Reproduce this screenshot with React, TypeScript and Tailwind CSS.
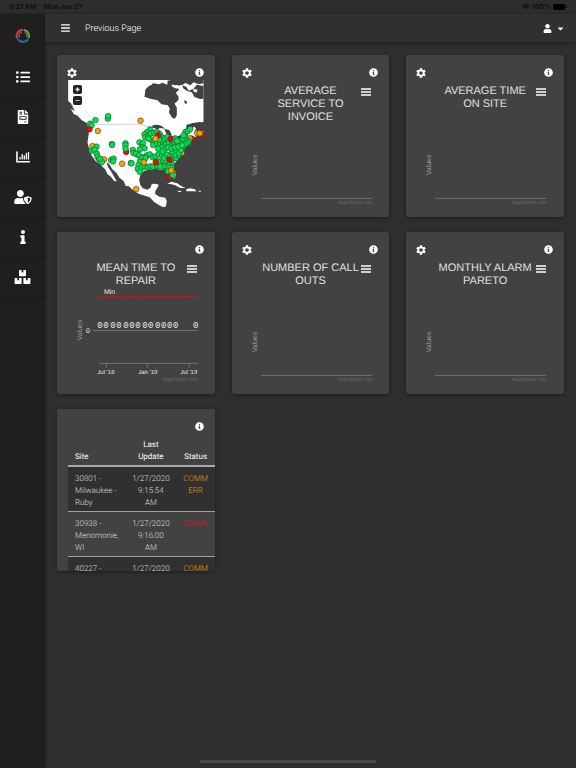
import type { ReactNode } from "react";
import {
  FaBars,
  FaBoxes,
  FaCaretDown,
  FaFileInvoice,
  FaInfo,
  FaInfoCircle,
  FaListUl,
  FaUser,
  FaUserShield,
  FaWifi,
} from "react-icons/fa";
import { MdSettings } from "react-icons/md";

const GREEN = "#00e353";
const ORANGE = "#ffa200";
const RED = "#fb0007";

type Site = [number, number, string];

const green: [number, number][] = [
  [118, 198], [155, 194], [156, 186], [102, 209], [106, 214], [121, 278], [106, 290], [115, 287],
  [122, 299], [124, 308], [129, 316], [137, 324], [131, 314], [167, 270], [168, 273], [208, 268], [208, 274],
  [208, 284], [165, 318], [172, 314], [171, 322], [224, 327], [226, 328], [230, 288], [232, 297],
  [240, 299], [250, 265], [260, 268], [258, 280], [265, 283], [251, 286], [249, 304], [256, 312],
  [251, 323], [247, 334], [245, 345], [251, 353], [257, 340], [266, 338], [275, 339], [283, 337],
  [291, 338], [303, 336], [313, 337], [326, 337], [335, 340], [343, 338], [335, 352], [349, 363],
  [345, 326], [337, 325], [328, 320], [315, 321], [306, 323], [272, 304], [281, 301], [268, 312],
  [290, 310], [299, 307], [308, 301], [318, 303], [324, 311], [333, 302], [341, 309], [350, 314],
  [360, 312], [366, 304], [356, 301], [349, 293], [361, 290], [369, 297], [379, 282], [374, 288],
  [281, 227], [272, 235], [265, 241], [267, 250], [276, 247], [284, 238], [294, 236], [302, 235],
  [311, 241], [316, 250], [286, 258], [277, 254], [295, 262], [291, 273], [303, 269], [312, 268],
  [321, 267], [329, 270], [338, 268], [347, 274], [354, 266], [362, 272], [319, 258], [309, 257],
  [326, 252], [334, 249], [318, 279], [327, 284], [336, 280], [319, 292], [306, 284], [346, 284],
  [356, 280], [367, 278], [373, 262], [380, 254], [387, 247], [388, 234], [395, 231], [402, 225],
  [382, 244], [399, 261], [395, 266], [387, 271], [378, 274], [357, 253], [350, 256], [363, 261],
];

const orangeBelow: [number, number][] = [
  [109, 276], [144, 316], [262, 310], [318, 328], [350, 355], [377, 270], [377, 297], [401, 253],
];
const orangeAbove: [number, number][] = [
  [253, 200], [125, 231], [198, 329], [240, 405], [298, 254], [263, 325], [345, 349], [423, 238],
  [431, 238],
];
const redBelow: [number, number][] = [
  [210, 294], [243, 301], [366, 267], [407, 254], [437, 242], [340, 368],
];
const redAbove: [number, number][] = [
  [100, 226], [306, 244], [343, 255], [299, 325], [340, 317],
];

const tag = (points: [number, number][], color: string): Site[] =>
  points.map(([x, y]) => [x, y, color]);

const sites: Site[] = [
  ...tag(redBelow, RED),
  ...tag(orangeBelow, ORANGE),
  ...tag(green, GREEN),
  ...tag(redAbove, RED),
  ...tag(orangeAbove, ORANGE),
];

function SiteMap() {
  return (
    <div className="relative h-[127px]">
      <svg
        viewBox="36 78 406 381"
        className="h-full w-full"
        preserveAspectRatio="xMidYMid meet"
        role="img"
        aria-label="Site map"
      >
        <path
          fill="#fff"
          d="M36 78H442V204L420 209 398 214 389 224 399 221 413 216 420 224 414 235 426 230 442 232V246L425 244 412 252 402 265 394 272 387 282 382 292 378 303 370 311 362 320 352 331 353 346 360 363 354 374 344 366 338 350 326 345 312 347 300 344 281 347 264 350 253 362 249 377 252 392 260 403 274 407 283 401 287 390 298 389 308 392 303 403 298 410 297 420 310 428 327 431 332 442 329 458 320 459 307 452 293 443 281 430 266 425 249 420 231 409 218 397 209 396 202 381 190 371 181 357 168 345 158 328 151 326 156 340 164 351 173 367 182 382 174 381 162 366 154 361 148 347 142 341 132 330 118 321 106 304 99 285 94 265 98 239 96 220 91 206 77 199 62 183 52 180 47 166 56 172 48 151 36 141Z"
        />
        <g fill="none" stroke="#fff" strokeWidth="3">
          <path strokeDasharray="4 3" d="M38 132l12 26 9 17M51 151l8 17M44 166l16 18" />
        </g>
        <g fill="#424242">
          <path d="M276 98l15-10 18 3 10-5 14 6 2-13 15 5-4 13 14 2 9 8-10 9 8 12 0 10-12 11 7 12 0 23-6 10-8-3-10-16 3-11-6-10-19-3-12-12-22-5-17-6 3-22z" />
          <path d="M339 78h103v10l-14 3-16-6-9 9-15-7-9 5-17 4-18-6-3-9z" />
          <path d="M378 94l12 4 8 12 14-6 10-12 20 4v38l-10 1-17-6-8-14-14-4-12-8z" />
          <path d="M283 220l10-7 12-1 12 4 9 8-15-2-7 5-10-5z" />
          <path d="M305 228l9 2-5 24-8 4zM324 224l15 4 7 12 1 16-10-5-9-17zM345 255l29-12 9-2-4 8-29 12z" />
          <path d="M390 213l20-6 21-3 11 3v8l-15 2-13 1-12 8-10 4z" />
          <path d="M384 139l7 2 2 7-7 1z" />
        </g>
        <g fill="#fff">
          <path d="M268 91l18 2 2-3-15-3zM348 98l14-5 8 3-9 8zM412 104l12 3-3 9-10-4zM333 390l13-7 17 5 13 9 12 5-15 0-16-8-13-4zM390 406l12-3 14 3 5 6-15 0-15 0zM364 410l12 1-2 3-8-1zM428 410h6v3h-6z" />
        </g>
        <g fill="none" stroke="#b9b9b9" strokeWidth="2">
          <path d="M102 211H253l17 4 15 4" />
          <path d="M138 327l26 5 18 3 15-2 10 9 11 4 6-3 12 14 11 3" strokeWidth="1" />
          <path d="M281 430l7-11h9M307 451l6-14 15-5" strokeWidth="1" />
        </g>
        {sites.map(([x, y, color], i) => (
          <circle key={i} cx={x} cy={y} r="8.5" fill={color} stroke="#1d3a22" strokeWidth="1.6" />
        ))}
      </svg>
      <div className="absolute top-[5px] left-[5px] flex flex-col gap-[2px]">
        <button aria-label="Zoom in" className="flex size-[9px] items-center justify-center rounded-[2px] bg-[#222]">
          <svg viewBox="0 0 10 10" className="size-[9px]" stroke="#fff" strokeWidth="1.4">
            <path d="M5 2.8v4.4M2.8 5h4.4" />
          </svg>
        </button>
        <button aria-label="Zoom out" className="flex size-[9px] items-center justify-center rounded-[2px] bg-[#222]">
          <svg viewBox="0 0 10 10" className="size-[9px]" stroke="#ccc" strokeWidth="1.2">
            <path d="M2.8 5h4.4" />
          </svg>
        </button>
      </div>
    </div>
  );
}

function Card({ settings = true, children }: { settings?: boolean; children: ReactNode }) {
  return (
    <section className="h-[162px] overflow-hidden rounded-[3px] bg-[#424242] pt-[10px] shadow-[0_1px_4px_rgba(0,0,0,0.4)]">
      <div className="flex h-[15px] items-center pr-[11px] pl-[9px]">
        {settings && (
          <button aria-label="Settings" className="text-white">
            <MdSettings className="size-[12px]" />
          </button>
        )}
        <button aria-label="Information" className="ml-auto text-white">
          <FaInfoCircle className="size-[9px]" />
        </button>
      </div>
      <div className="pl-[11px]">{children}</div>
    </section>
  );
}

function Chart({ title, children, valuesY = 85 }: { title: string; children: ReactNode; valuesY?: number }) {
  return (
    <div className="mr-[11px] grid h-[127px] font-['Liberation_Sans',Arial,sans-serif]">
      <svg viewBox="0 0 136 127" className="col-start-1 row-start-1 h-[127px] w-full">
        <text
          transform={`translate(14 ${valuesY}) rotate(-90)`}
          textAnchor="middle"
          fontSize="7"
          fill="#9a9a9a"
        >
          Values
        </text>
        {children}
        <text x="130" y="124" textAnchor="end" fontSize="5" fill="#6c6c6c">
          Highcharts.com
        </text>
      </svg>
      <div className="relative col-start-1 row-start-1 pt-[5px]">
        <h2 className="mx-auto w-[98px] text-center text-[11px] leading-[13px] text-[#e0e0e0]">{title}</h2>
        <button aria-label="Chart menu" className="absolute top-[8px] right-[7px] flex flex-col gap-[1px]">
          <span className="h-[2px] w-[10px] bg-[#cfcfcf]" />
          <span className="h-[2px] w-[10px] bg-[#cfcfcf]" />
          <span className="h-[2px] w-[10px] bg-[#cfcfcf]" />
        </button>
      </div>
    </div>
  );
}

function EmptyChart({ title }: { title: string }) {
  return (
    <Chart title={title}>
      <path d="M18 118.5H130" stroke="#707070" strokeWidth="1" />
    </Chart>
  );
}

const zeroLabels = [32, 38, 45, 51, 58, 64, 70, 77, 83, 90, 96, 102, 108, 128];

function RepairChart() {
  return (
    <Chart title="MEAN TIME TO REPAIR" valuesY={73}>
      <path d="M25 73.5H130M31 106.5H130M38.5 106v5M79.5 106v5M121.5 106v5" stroke="#707070" strokeWidth="1" fill="none" />
      <path d="M31 39.5H130" stroke="#f00" strokeWidth="1.4" strokeDasharray="4 1.6" />
      <g fontSize="6" fill="#e6e6e6">
        <text x="36" y="37" fontSize="7">Min</text>
        <text x="18" y="76" fontSize="7">0</text>
        <text x="38" y="117" textAnchor="middle">Jul '18</text>
        <text x="80" y="117" textAnchor="middle">Jan '19</text>
        <text x="121" y="117" textAnchor="middle">Jul '19</text>
      </g>
      <g fontSize="6" fontWeight="700" fill="#333" stroke="#eee" strokeWidth="1.5" paintOrder="stroke" textAnchor="middle">
        {zeroLabels.map((x) => (
          <text key={x} x={x} y="70">0</text>
        ))}
      </g>
    </Chart>
  );
}

const statusRows = [
  { site: "30801 - Milwaukee - Ruby", date: "1/27/2020 9:15:54 AM", status: "COMM ERR", down: false },
  { site: "30938 - Menomonie, WI", date: "1/27/2020 9:16:00 AM", status: "DOWN", down: true },
  { site: "40227 -", date: "1/27/2020", status: "COMM", down: false },
];

function StatusTable() {
  return (
    <table className="w-full table-fixed border-collapse text-[8px] leading-[12px] text-[#dcdcdc]">
      <colgroup>
        <col className="w-[39%]" />
        <col className="w-[35%]" />
        <col className="w-[26%]" />
      </colgroup>
      <thead>
        <tr className="border-b-2 border-[#a8a8a8] align-bottom text-white">
          <th className="pt-[5px] pb-[2px] pl-[7px] text-left font-normal">Site</th>
          <th className="px-[8px] pt-[5px] pb-[2px] font-normal">Last Update</th>
          <th className="pt-[5px] pb-[2px] font-normal">Status</th>
        </tr>
      </thead>
      <tbody>
        {statusRows.map((row) => (
          <tr
            key={row.site}
            className="border-b border-[#a0a0a0] align-top font-light odd:bg-[#303030]"
          >
            <td className="pt-[6px] pb-[2px] pl-[7px]">{row.site}</td>
            <td className="px-[6px] pt-[6px] pb-[2px] text-center">{row.date}</td>
            <td className={`px-[4px] pt-[6px] pb-[2px] text-center ${row.down ? "text-[#e8101a]" : "text-[#e8980c]"}`}>
              {row.status}
            </td>
          </tr>
        ))}
      </tbody>
    </table>
  );
}

function BarsIcon() {
  return (
    <svg viewBox="0 0 14 12" className="h-[12px] w-[14px]" fill="none" stroke="currentColor" strokeLinecap="round">
      <path d="M1 1v9.8h12.3" strokeWidth="1.6" />
      <path d="M4 8V6.5M6.2 8V3.5M8.3 8V5M10.4 8V2.5M12.5 8V1.5" strokeWidth="1.3" />
    </svg>
  );
}

const navItems = [
  { label: "List", icon: <FaListUl className="size-[14px]" /> },
  { label: "Invoices", icon: <FaFileInvoice className="size-[14px]" /> },
  { label: "Reports", icon: <BarsIcon /> },
  { label: "User security", icon: <FaUserShield className="h-[14px] w-[18px]" /> },
  { label: "About", icon: <FaInfo className="size-[14px]" /> },
  { label: "Inventory", icon: <FaBoxes className="h-[14px] w-[17px]" /> },
];

function Logo() {
  return (
    <svg viewBox="0 0 16 16" className="size-4" fill="none" strokeWidth="2.2">
      <path d="M2.2 10.4A6.1 6.1 0 0 1 8 1.9" stroke="#c93a4c" />
      <path d="M8.8 2a6.1 6.1 0 0 1 4.9 8.1" stroke="#6f9a4b" />
      <path d="M13.1 11.2a6.1 6.1 0 0 1-10.2 0" stroke="#14719f" />
      <path d="M4.4 9.6A3.9 3.9 0 0 1 7 4.2" stroke="#e59aa2" strokeWidth=".7" />
      <path d="M9.5 4.4a3.9 3.9 0 0 1 2.2 4.8" stroke="#a8c98a" strokeWidth=".7" />
    </svg>
  );
}

export default function App() {
  return (
    <div className="flex min-h-screen flex-col bg-[#2f2f2f] font-[Roboto,sans-serif] [text-rendering:geometricPrecision]">
      <div className="flex h-[14px] items-center gap-[7px] bg-[#2d2d2d] pr-[9px] pl-[9px] font-[Inter,sans-serif] text-[7px] leading-[14px] font-semibold text-[#0c0c0c]">
        <span>9:21 AM</span>
        <span>Mon Jan 27</span>
        <span className="ml-auto flex items-center gap-[2px]">
          <FaWifi className="size-[8px]" />
          <span>100%</span>
          <svg viewBox="0 0 14 6" className="h-[6px] w-[14px]">
            <rect width="12" height="6" rx="1.5" fill="#000" />
            <path d="M13 2v2" stroke="#000" />
          </svg>
        </span>
      </div>
      <div className="flex grow">
        <aside className="w-[45px] shrink-0 bg-[#201f1d] shadow-[1px_0_3px_rgba(0,0,0,0.3)]">
          <a href="#home" aria-label="Home" className="flex h-[43px] items-center justify-center">
            <Logo />
          </a>
          <nav className="flex flex-col">
            {navItems.map((item) => (
              <a
                key={item.label}
                href="#nav"
                aria-label={item.label}
                className="flex h-10 items-center justify-center border-b border-[#1b1a18] text-white"
              >
                {item.icon}
              </a>
            ))}
          </nav>
        </aside>
        <div className="flex min-w-0 grow flex-col">
          <header className="flex h-[28px] items-center bg-[#303030] pr-[11px] pl-4 text-white shadow-[0_1px_4px_rgba(0,0,0,0.4)]">
            <button aria-label="Toggle menu">
              <FaBars className="h-[10px] w-[9px]" />
            </button>
            <a href="#previous" className="ml-[15px] pt-[2px] text-[9px] leading-[14px] font-light">
              Previous Page
            </a>
            <button aria-label="Account" className="ml-auto flex items-center gap-[4px]">
              <FaUser className="size-[9px]" />
              <FaCaretDown className="size-[9px]" />
            </button>
          </header>
          <main className="grid grid-cols-3 gap-x-[17px] gap-y-[15px] px-3 pt-[13px]">
            <Card>
              <div className="pr-[11px]">
                <SiteMap />
              </div>
            </Card>
            <Card>
              <EmptyChart title="AVERAGE SERVICE TO INVOICE" />
            </Card>
            <Card>
              <EmptyChart title="AVERAGE TIME ON SITE" />
            </Card>
            <Card settings={false}>
              <RepairChart />
            </Card>
            <Card>
              <EmptyChart title="NUMBER OF CALL OUTS" />
            </Card>
            <Card>
              <EmptyChart title="MONTHLY ALARM PARETO" />
            </Card>
            <Card settings={false}>
              <StatusTable />
            </Card>
          </main>
        </div>
      </div>
      <div className="fixed bottom-[5px] left-1/2 h-[3px] w-[176px] -translate-x-1/2 rounded-full bg-[#4b4b4b]" />
    </div>
  );
}
